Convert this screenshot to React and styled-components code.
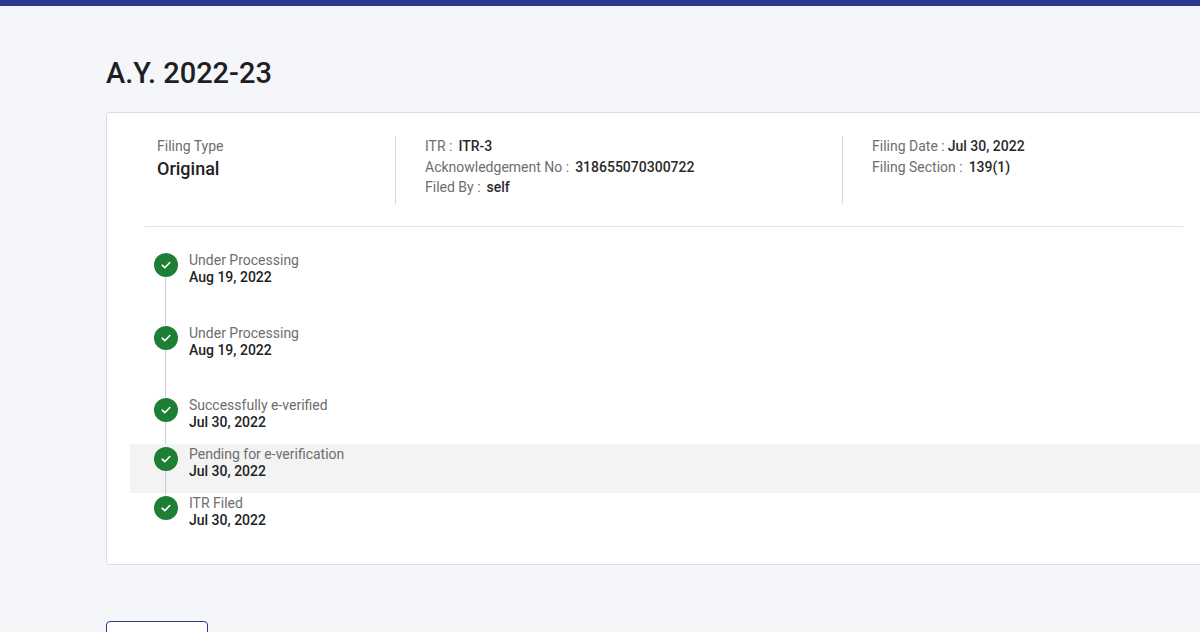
import React from "react";
import styled, { createGlobalStyle } from "styled-components";

const Global = createGlobalStyle`
  html, body { margin: 0; padding: 0; background: #f5f6fa; overflow: hidden; }
  body { font-family: Roboto, "Liberation Sans", sans-serif; }
`;

const TopBar = styled.div`height: 6px; background: #2b3990;`;
const Page = styled.div`padding: 50px 0 0 106px; width: 1116px;`;
const Title = styled.h1`
  margin: 0 0 22px; font-size: 29px; line-height: 34px; font-weight: 500; color: #1f1f1f;
`;
const Card = styled.div`
  background: #fff; border: 1px solid #dcdde3; border-radius: 3px;
  padding: 23px 38px 23px 38px; overflow: hidden;
`;
const Header = styled.div`
  display: grid; grid-template-columns: 250px 447px 1fr;
  padding-bottom: 22px; border-bottom: 1px solid #e2e2e2; margin-bottom: 23px;
`;
const Col = styled.div`
  padding-left: ${p => p.$first ? 12 : 29}px;
  border-left: ${p => p.$first ? "none" : "1px solid #d8d8d8"};
  min-height: 68px; font-size: 14px; line-height: 20.5px;
`;
const Label = styled.span`color: #6e6e6e;`;
const Value = styled.span`color: #2a2a2a; font-weight: 500; margin-left: 6px;`;
const BigValue = styled.div`font-size: 18px; font-weight: 500; color: #222; margin-top: 2px;`;
const Line = styled.div``;

const Row = styled.div`
  position: relative; display: flex; gap: 11px;
  margin-left: -15px; margin-right: -60px; padding: 2px 0 0 24px;
  height: ${p => p.$h}px; box-sizing: border-box;
  background: ${p => p.$hl ? "#f3f3f3" : "transparent"};
  &::before {
    content: ${p => p.$last ? "none" : "''"};
    position: absolute; left: 35px; top: 24px; bottom: -2px; width: 1px; background: #c9cadb;
  }
`;
const Check = styled.div`
  width: 24px; height: 24px; border-radius: 50%; background: #1e7e34; flex: none;
  display: flex; align-items: center; justify-content: center; margin-top: 1px; position: relative; z-index: 1;
`;
const Texts = styled.div`font-size: 14px; line-height: 17px;`;
const Status = styled.div`color: #6e6e6e;`;
const Date = styled.div`color: #222; font-weight: 500;`;
const Button = styled.div`
  margin-top: 56px; width: 100px; height: 30px; border: 1px solid #2b3990;
  border-radius: 4px; background: #fff;
`;

const items = [
  ["Under Processing", "Aug 19, 2022", 73],
  ["Under Processing", "Aug 19, 2022", 72],
  ["Successfully e-verified", "Jul 30, 2022", 49],
  ["Pending for e-verification", "Jul 30, 2022", 49, true],
  ["ITR Filed", "Jul 30, 2022", 48],
];

export default function App() {
  return (
    <>
      <Global />
      <TopBar />
      <Page>
        <Title>A.Y. 2022-23</Title>
        <Card>
          <Header>
            <Col $first>
              <Label>Filing Type</Label>
              <BigValue>Original</BigValue>
            </Col>
            <Col>
              <Line><Label>ITR :</Label><Value>ITR-3</Value></Line>
              <Line><Label>Acknowledgement No :</Label><Value>318655070300722</Value></Line>
              <Line><Label>Filed By :</Label><Value>self</Value></Line>
            </Col>
            <Col>
              <Line><Label>Filing Date :</Label><Value style={{ marginLeft: 3 }}>Jul 30, 2022</Value></Line>
              <Line><Label>Filing Section :</Label><Value>139(1)</Value></Line>
            </Col>
          </Header>
          {items.map(([s, d, h, hl], i) => (
            <Row key={i} $h={h} $hl={hl} $last={i === items.length - 1}>
              <Check>
                <svg width="12" height="12" viewBox="0 0 12 12"><path d="M2.2 6.2l2.6 2.5 5-5.2" fill="none" stroke="#fff" strokeWidth="1.6" strokeLinecap="round" strokeLinejoin="round" /></svg>
              </Check>
              <Texts><Status>{s}</Status><Date>{d}</Date></Texts>
            </Row>
          ))}
        </Card>
        <Button />
      </Page>
    </>
  );
}
